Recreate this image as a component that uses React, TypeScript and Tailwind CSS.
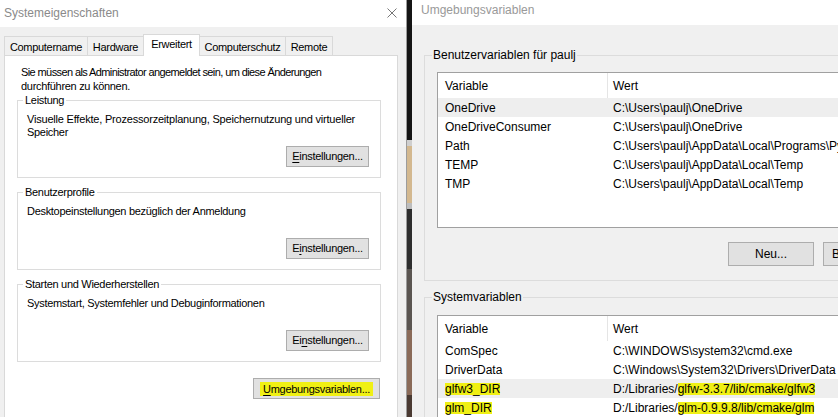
import React from "react";

const FONT = "font-['Liberation_Sans',Arial,sans-serif]";

function Acc({ text, idx }: { text: string; idx: number }) {
  return (
    <>
      {text.slice(0, idx)}
      <span className="underline underline-offset-[2px] decoration-[1px]">{text[idx]}</span>
      {text.slice(idx + 1)}
    </>
  );
}

function LBtn({ children, w }: { children: React.ReactNode; w: string }) {
  return (
    <div
      className={`${w} h-[21px] bg-[#e1e1e1] border border-[#adadad] flex items-center justify-center leading-[13px] whitespace-nowrap`}
    >
      {children}
    </div>
  );
}

function LGroup({
  label,
  children,
  accIdx,
  mt,
}: {
  label: string;
  children: React.ReactNode;
  accIdx: number;
  mt: string;
}) {
  return (
    <div className={`${mt} ml-[12px] w-[364px] h-[78px] border border-[#dcdcdc] flex flex-col`}>
      <div className="-mt-[8px] ml-[5px] px-[2px] bg-white self-start h-[14px] leading-[14px] whitespace-nowrap">
        {label}
      </div>
      <div className="mt-[6px] h-[33px] pl-[9px] leading-[13px] whitespace-nowrap">{children}</div>
      <div className="flex justify-end pr-[11px]">
        <LBtn w="w-[83px]">
          <Acc text="Einstellungen..." idx={accIdx} />
        </LBtn>
      </div>
    </div>
  );
}

type Row = { name: React.ReactNode; value: React.ReactNode; sel?: boolean };

function Hl({ children }: { children: React.ReactNode }) {
  return <span className="bg-[#f0f014] inline-block leading-[12px] h-[12px]">{children}</span>;
}

function ListView({ rows, h }: { rows: Row[]; h: string }) {
  return (
    <div className={`ml-[12px] w-[640px] ${h} border border-[#a0a0a0] bg-white flex flex-col`}>
      <div className="flex h-[25px] shrink-0">
        <div className="w-[170px] h-full pl-[7px] border-r border-[#e5e5e5] flex items-center">Variable</div>
        <div className="pl-[5px] flex items-center">Wert</div>
      </div>
      {rows.map((r, i) => (
        <div key={i} className={`flex h-[19px] shrink-0 items-center whitespace-nowrap ${r.sel ? "bg-[#eeeeee]" : ""}`}>
          <div className="w-[170px] pl-[7px]">{r.name}</div>
          <div className="pl-[5px]">{r.value}</div>
        </div>
      ))}
    </div>
  );
}

function RBtn({ children }: { children: React.ReactNode }) {
  return (
    <div className="w-[86px] h-[24px] bg-[#e1e1e1] border border-[#adadad] flex items-center justify-center shrink-0 whitespace-nowrap">
      {children}
    </div>
  );
}

export default function App() {
  const userRows: Row[] = [
    { name: "OneDrive", value: "C:\\Users\\paulj\\OneDrive", sel: true },
    { name: "OneDriveConsumer", value: "C:\\Users\\paulj\\OneDrive" },
    { name: "Path", value: "C:\\Users\\paulj\\AppData\\Local\\Programs\\Python\\Python310\\Scripts\\;" },
    { name: "TEMP", value: "C:\\Users\\paulj\\AppData\\Local\\Temp" },
    { name: "TMP", value: "C:\\Users\\paulj\\AppData\\Local\\Temp" },
  ];
  const sysRows: Row[] = [
    { name: "ComSpec", value: "C:\\WINDOWS\\system32\\cmd.exe" },
    { name: "DriverData", value: "C:\\Windows\\System32\\Drivers\\DriverData" },
    {
      name: <Hl>glfw3_DIR</Hl>,
      value: (
        <>
          D:/Libraries/<Hl>glfw-3.3.7/lib/cmake/glfw3</Hl>
        </>
      ),
      sel: true,
    },
    {
      name: <Hl>glm_DIR</Hl>,
      value: (
        <>
          D:/Libraries/<Hl>glm-0.9.9.8/lib/cmake/glm</Hl>
        </>
      ),
    },
  ];

  return (
    <div className={`${FONT} w-[838px] h-[417px] overflow-hidden flex bg-black text-black`}>
      {/* Left dialog: Systemeigenschaften */}
      <div className="w-[407px] h-full shrink-0 flex flex-col bg-[#f0f0f0] border-r border-[#9c9c9c] overflow-hidden">
        <div className="h-[27px] shrink-0 bg-white flex items-start justify-between pl-[4px] pr-[9px]">
          <div className="pt-[6px] text-[12px] leading-[14px] text-[#8a8a8a]">Systemeigenschaften</div>
          <svg width="10" height="10" viewBox="0 0 10 10" className="mt-[8px]">
            <path d="M0.5 0.5 L9.5 9.5 M9.5 0.5 L0.5 9.5" stroke="#777" strokeWidth="1" fill="none" />
          </svg>
        </div>
        <div className="text-[11px] tracking-[-0.3px] flex flex-col flex-1">
          {/* Tabs */}
          <div className="mt-[7px] h-[21px] shrink-0 flex items-end pl-[4px]">
            <div className="w-[84px] h-[19px] border border-b-0 border-[#d9d9d9] flex items-center justify-center pt-[2px]">
              Computername
            </div>
            <div className="-ml-px w-[57px] h-[19px] border border-b-0 border-[#d9d9d9] flex items-center justify-center pt-[2px]">
              Hardware
            </div>
            <div className="-ml-px -mb-px relative z-10 w-[57px] h-[22px] bg-white border border-b-0 border-[#d9d9d9] flex items-center justify-center pb-[2px]">
              Erweitert
            </div>
            <div className="-ml-px w-[87px] h-[19px] border border-b-0 border-[#d9d9d9] flex items-center justify-center pt-[2px]">
              Computerschutz
            </div>
            <div className="-ml-px w-[48px] h-[19px] border border-b-0 border-[#d9d9d9] flex items-center justify-center pt-[2px]">
              Remote
            </div>
          </div>
          {/* Panel */}
          <div className="ml-[4px] w-[394px] flex-1 bg-white border-l border-t border-r border-[#d9d9d9] flex flex-col">
            <div className="pt-[9px] pl-[16px] leading-[14px] whitespace-nowrap">
              <div className="tracking-[-0.6px]">Sie müssen als Administrator angemeldet sein, um diese Änderungen</div>
              <div>durchführen zu können.</div>
            </div>
            <LGroup label="Leistung" accIdx={0} mt="mt-[7px]">
              <div className="tracking-[-0.2px]">
                Visuelle Effekte, Prozessorzeitplanung, Speichernutzung und virtueller
              </div>
              <div>Speicher</div>
            </LGroup>
            <LGroup label="Benutzerprofile" accIdx={1} mt="mt-[14px]">
              Desktopeinstellungen bezüglich der Anmeldung
            </LGroup>
            <LGroup label="Starten und Wiederherstellen" accIdx={2} mt="mt-[14px]">
              Systemstart, Systemfehler und Debuginformationen
            </LGroup>
            <div className="mt-[16px] flex justify-end pr-[17px]">
              <LBtn w="w-[127px]">
                <span className="bg-[#f0f014] px-[3px] leading-[14px]">
                  <Acc text="Umgebungsvariablen..." idx={0} />
                </span>
              </LBtn>
            </div>
          </div>
        </div>
      </div>

      {/* Wallpaper strip */}
      <div className="w-[5px] h-full shrink-0 flex flex-col">
        <div className="h-[140px] bg-[#151515]" />
        <div className="h-[6px] bg-[#cfcfcf]" />
        <div className="h-[57px] bg-[#d3b88f]" />
        <div className="h-[6px] bg-[#bdbdbd]" />
        <div className="h-[60px] bg-[#2e2e2e]" />
        <div className="h-[61px] bg-[#5a5551]" />
        <div className="h-[65px] bg-[#8a6a58]" />
        <div className="flex-1 bg-[#4a3a32]" />
      </div>

      {/* Right dialog: Umgebungsvariablen */}
      <div className="flex-1 min-w-0 h-full bg-[#f0f0f0] flex flex-col overflow-hidden text-[12px]">
        <div className="h-[25px] shrink-0 bg-white pl-[9px] pt-[3px] leading-[14px] text-[#999999]">
          Umgebungsvariablen
        </div>
        <div className="pt-[30px] pl-[12px] flex flex-col">
          <div className="w-[700px] h-[226px] border-l border-t border-b border-[#dcdcdc] flex flex-col">
            <div className="-mt-[8px] ml-[7px] px-[1px] bg-[#f0f0f0] self-start h-[14px] leading-[14px] whitespace-nowrap">
              Benutzervariablen für paulj
            </div>
            <div className="mt-[10px]">
              <ListView rows={userRows} h="h-[156px]" />
            </div>
            <div className="mt-[14px] ml-[303px] flex gap-[9px]">
              <RBtn>Neu...</RBtn>
              <RBtn>Bearbeiten...</RBtn>
              <RBtn>Löschen</RBtn>
            </div>
          </div>
          <div className="mt-[16px] w-[700px] h-[200px] border-l border-t border-[#dcdcdc] flex flex-col">
            <div className="-mt-[8px] ml-[7px] px-[1px] bg-[#f0f0f0] self-start h-[14px] leading-[14px] whitespace-nowrap">
              Systemvariablen
            </div>
            <div className="mt-[11px]">
              <ListView rows={sysRows} h="h-[200px]" />
            </div>
          </div>
        </div>
      </div>
    </div>
  );
}
